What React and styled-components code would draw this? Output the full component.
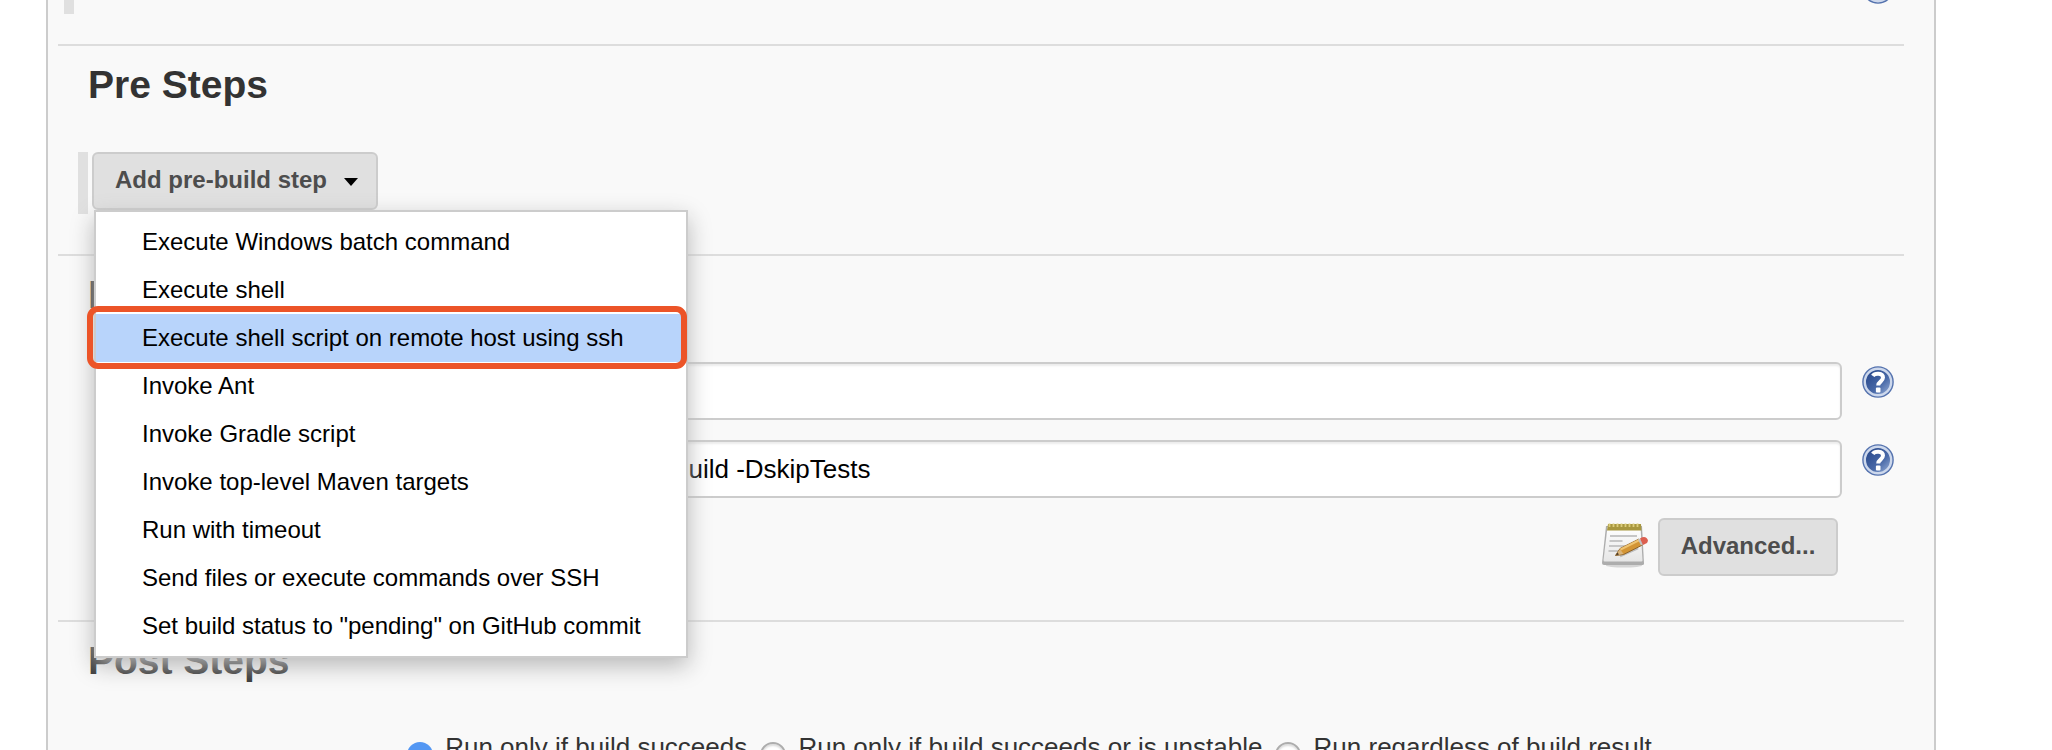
import React from "react";
import styled, { createGlobalStyle, css } from "styled-components";

const GlobalStyle = createGlobalStyle`
  body {
    margin: 0;
    background: #fff;
    color: #333;
    font-family: "Liberation Sans", Arial, sans-serif;
  }
`;

const Page = styled.main`
  height: 750px;
  overflow: hidden;
`;

const Panel = styled.div`
  box-sizing: border-box;
  width: 1890px;
  height: 750px;
  margin-left: 46px;
  padding: 0 30px 0 10px;
  border: solid #ccc;
  border-width: 0 2px;
  background: #f9f9f9;
`;

const PreviousSection = styled.div`
  display: flex;
  justify-content: space-between;
  align-items: flex-start;
  height: 44px;
  padding: 0 10px 0 6px;
`;

const Section = styled.section`
  box-sizing: border-box;
  height: ${(p) => p.$height}px;
  padding-top: 18px;
  border-top: 2px solid #ddd;
`;

const Heading = styled.h2`
  margin: 0 0 0 30px;
  font-size: 39px;
  line-height: 42px;
`;

const DragHandle = styled.div`
  width: 10px;
  height: ${(p) => p.$height}px;
  background: #e0e0e0;
`;

const StepRow = styled.div`
  position: relative;
  display: flex;
  gap: 4px;
  margin: 46px 0 0 20px;
`;

const Button = styled.button`
  box-sizing: border-box;
  display: flex;
  align-items: center;
  justify-content: ${(p) => (p.$menu ? "flex-start" : "center")};
  gap: 17px;
  width: ${(p) => p.$width}px;
  height: 58px;
  padding: 0 ${(p) => (p.$menu ? 21 : 0)}px 2px;
  border: 2px solid #ccc;
  border-radius: 6px;
  background: #e0e0e0;
  color: #4d4d4d;
  font: bold 24px "Liberation Sans", Arial, sans-serif;
  white-space: nowrap;
`;

const Caret = styled.span`
  border: 7px solid transparent;
  border-top: 8px solid #000;
  border-bottom: 0;
  margin-top: 4px;
`;

const Menu = styled.ul`
  position: absolute;
  z-index: 2;
  top: 58px;
  left: 16px;
  box-sizing: border-box;
  width: 594px;
  margin: 0;
  padding: 6px 0;
  border: 2px solid #ccc;
  background: #fff;
  box-shadow: 0 8px 22px #b8b8b8;
  list-style: none;
`;

const MenuItem = styled.li`
  position: relative;
  height: 48px;
  padding-left: 46px;
  color: #000;
  font-size: 24px;
  line-height: 48px;
  white-space: nowrap;
  ${(p) =>
    p.$active &&
    css`
      background: #b8d4fb;
      &::after {
        content: "";
        position: absolute;
        top: -8px;
        left: -9px;
        box-sizing: border-box;
        width: 600px;
        height: 63px;
        border: 6px solid #ec5428;
        border-radius: 11px;
      }
    `}
`;

const Field = styled.div`
  display: flex;
  align-items: flex-start;
  gap: 20px;
  margin: ${(p) => p.$top}px 10px 0 342px;
`;

const Input = styled.div`
  box-sizing: border-box;
  flex: 1;
  height: 58px;
  padding-left: 272px;
  border: 2px solid #ccc;
  border-radius: 6px;
  background: #fff;
  box-shadow: inset 0 2px 2px rgba(0, 0, 0, 0.075);
  color: #000;
  font-size: 26px;
  line-height: 54px;
`;

const HelpSvg = styled.svg`
  display: block;
  flex: none;
  width: 32px;
  height: 32px;
  margin-top: ${(p) => p.$top}px;
`;

const Actions = styled.div`
  display: flex;
  justify-content: flex-end;
  gap: 10px;
  margin: 20px 66px 0 0;
`;

const NotepadSvg = styled.svg`
  width: 48px;
  height: 48px;
  margin-top: 2px;
`;

const Choices = styled.div`
  display: flex;
  gap: 13px;
  margin: 50px 0 0 349px;
`;

const Choice = styled.label`
  display: flex;
  align-items: flex-start;
  gap: 12.2px;
  height: 30px;
  font-size: 26px;
  line-height: 30px;
  white-space: nowrap;
`;

const Radio = styled.span`
  box-sizing: border-box;
  width: 26px;
  height: 26px;
  margin-top: 10px;
  border-radius: 50%;
  border: ${(p) => (p.$checked ? "0" : "2px solid #adadad")};
  background: ${(p) => (p.$checked ? "#5397f3" : "#fff")};
  box-shadow: ${(p) => (p.$checked ? "none" : "inset 0 2px 2px #ddd")};
`;

function Help({ top = 4 }) {
  return (
    <HelpSvg $top={top} viewBox="0 0 32 32" role="img" aria-label="Help">
      <defs>
        <linearGradient id="helpFill" x1="0" y1="0" x2="1" y2="1">
          <stop offset="0.2" stopColor="#2f4f91" />
          <stop offset="0.6" stopColor="#4a6aa8" />
          <stop offset="1" stopColor="#9db4dc" />
        </linearGradient>
      </defs>
      <circle cx="16" cy="16" r="15.8" fill="#5472ae" />
      <circle cx="16" cy="16" r="13.2" fill="url(#helpFill)" stroke="#cdd8ec" strokeWidth="2.4" />
      <path
        d="M10.8 9.800C12.600 7 21 6.300 21 11.600c0 4-4.800 4-4.800 7.900"
        fill="none"
        stroke="#fff"
        strokeWidth="4"
      />
      <rect x="13.900" y="21.600" width="4.600" height="4.800" rx="1" fill="#fff" />
    </HelpSvg>
  );
}

function Notepad() {
  return (
    <NotepadSvg viewBox="0 0 48 48" aria-hidden="true">
      <defs>
        <linearGradient id="paper" x1="0" y1="0" x2="0" y2="1">
          <stop offset="0" stopColor="#fff" />
          <stop offset="1" stopColor="#e6e6e6" />
        </linearGradient>
      </defs>
      <ellipse cx="24" cy="45.5" rx="18" ry="2" fill="#d5d5d5" />
      <path d="M6 6h36l2 37.500q0 1.500-1.500 1.500h-38.500q-2 0-2-2z" fill="#adadad" />
      <path d="M7.500 7h33l2 33.500q0 1-1 1h-37q-1 0-1-1.500z" fill="url(#paper)" />
      <path d="M8 4h33l.5 6.500h-34.500z" fill="#a8973f" />
      <path d="M9.500 3.500v3.500M13.500 3.500v3.500M17.500 3.500v3.500M21.500 3.500v3.500M25.500 3.500v3.500M29.500 3.500v3.500M33.500 3.500v3.500M37.500 3.500v3.500" stroke="#dccd7c" strokeWidth="1.800" />
      <path d="M10 16h27M9.500 21h13M9 26h16M8.500 31h10" stroke="#c6c6c6" strokeWidth="1.800" />
      <path d="M20 36l18-8" stroke="#bbb" strokeWidth="2.500" />
      <path d="M15.500 35.500l4.500-7L39 19l3.500 6L23.500 34.500z" fill="#d39535" stroke="#8f642b" strokeWidth="1" />
      <path d="M20.500 29.500l19-9.500" stroke="#efc471" strokeWidth="2" />
      <path d="M15.500 35.500l4.500-6.500 3.500 5z" fill="#dab47a" />
      <path d="M15.500 35.500l2-3 1.500 2z" fill="#4a3a27" />
      <path d="M38 19.500l3 6 2-1-3-6z" fill="#c2c2c2" />
      <path d="M40 18.500q4-2.500 6.500-.5t.5 5l-4 2z" fill="#dc5f50" />
    </NotepadSvg>
  );
}

const STEPS = [
  "Execute Windows batch command",
  "Execute shell",
  "Execute shell script on remote host using ssh",
  "Invoke Ant",
  "Invoke Gradle script",
  "Invoke top-level Maven targets",
  "Run with timeout",
  "Send files or execute commands over SSH",
  'Set build status to "pending" on GitHub commit',
];

const CONDITIONS = [
  "Run only if build succeeds",
  "Run only if build succeeds or is unstable",
  "Run regardless of build result",
];

export default function App() {
  return (
    <Page>
      <GlobalStyle />
      <Panel>
        <PreviousSection>
          <DragHandle $height={14} />
          <Help top={-28} />
        </PreviousSection>
        <Section $height={210}>
          <Heading>Pre Steps</Heading>
          <StepRow>
            <DragHandle $height={62} />
            <Button $width={286} $menu>
              Add pre-build step
              <Caret />
            </Button>
            <Menu>
              {STEPS.map((step, i) => (
                <MenuItem key={step} $active={i === 2}>
                  {step}
                </MenuItem>
              ))}
            </Menu>
          </StepRow>
        </Section>
        <Section $height={366}>
          <Heading>Build</Heading>
          <Field $top={46}>
            <Input />
            <Help />
          </Field>
          <Field $top={20}>
            <Input>build -DskipTests</Input>
            <Help />
          </Field>
          <Actions>
            <Notepad />
            <Button $width={180}>Advanced...</Button>
          </Actions>
        </Section>
        <Section $height={130}>
          <Heading>Post Steps</Heading>
          <Choices>
            {CONDITIONS.map((label, i) => (
              <Choice key={label}>
                <Radio $checked={i === 0} />
                {label}
              </Choice>
            ))}
          </Choices>
        </Section>
      </Panel>
    </Page>
  );
}
